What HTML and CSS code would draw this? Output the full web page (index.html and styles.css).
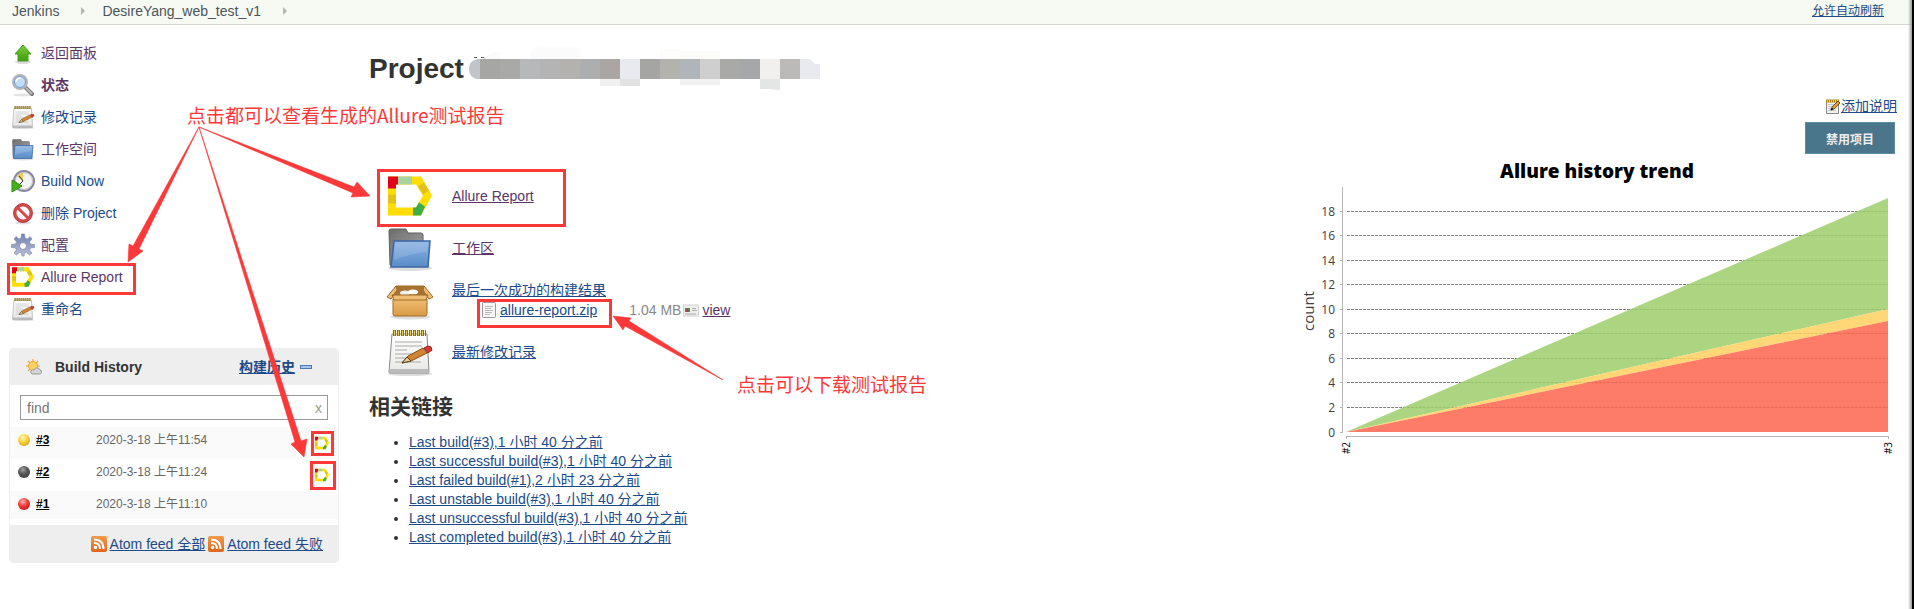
FILE: index.html
```html
<!DOCTYPE html>
<html lang="zh-CN">
<head>
<meta charset="utf-8">
<title>DesireYang_web_test_v1 [Jenkins]</title>
<link rel="stylesheet" href="styles.css">
</head>
<body>
<svg class="defs" aria-hidden="true">
  <defs>
    <linearGradient id="blue" x1="0" y1="0" x2="0" y2="1"><stop offset="0" stop-color="#86b2e2"/><stop offset="1" stop-color="#5a8cc8"/></linearGradient>
    <linearGradient id="gray" x1="0" y1="0" x2="1" y2="1"><stop offset="0" stop-color="#6c6c6c"/><stop offset="1" stop-color="#a8a8a8"/></linearGradient>
    <linearGradient id="paper" x1="0" y1="0" x2="0" y2="1"><stop offset="0" stop-color="#fff"/><stop offset="1" stop-color="#e8e8e6"/></linearGradient>
    <linearGradient id="green" x1="0" y1="0" x2="0" y2="1"><stop offset="0" stop-color="#7ad03a"/><stop offset="1" stop-color="#3f9c0c"/></linearGradient>
    <linearGradient id="steel" x1="0" y1="0" x2="0" y2="1"><stop offset="0" stop-color="#6e83ae"/><stop offset="1" stop-color="#b9bedb"/></linearGradient>
    <linearGradient id="feed" x1="0" y1="0" x2="0" y2="1"><stop offset="0" stop-color="#f39a4c"/><stop offset="1" stop-color="#df651b"/></linearGradient>
    <linearGradient id="wood" x1="0" y1="0" x2="0" y2="1"><stop offset="0" stop-color="#f0bd72"/><stop offset="1" stop-color="#d99b46"/></linearGradient>
    <radialGradient id="ballYellow" cx=".4" cy=".3" r=".7"><stop offset="0" stop-color="#fff6b0"/><stop offset=".5" stop-color="#f8d84a"/><stop offset="1" stop-color="#e0a818"/></radialGradient>
    <radialGradient id="ballGray" cx=".4" cy=".3" r=".7"><stop offset="0" stop-color="#a0a0a0"/><stop offset=".5" stop-color="#5c5c5c"/><stop offset="1" stop-color="#404040"/></radialGradient>
    <radialGradient id="ballRed" cx=".4" cy=".3" r=".7"><stop offset="0" stop-color="#ffb8b8"/><stop offset=".5" stop-color="#f24444"/><stop offset="1" stop-color="#d41818"/></radialGradient>
    <symbol id="allure" viewBox="0 0 44 39">
      <path d="M0 0h33L44 19 33 39H0zM8 8v23h20l7-12-7-11z" fill="#ffde00" fill-rule="evenodd"/>
      <path d="M0 0h10v8H8v4H0z" fill="#e3001b"/><path d="M10 0h14v8H10z" fill="#a5d3a2"/>
      <path d="M0 18h8v9H0zM30 10l6-4 5 8-6 4z" fill="#e0c313"/>
      <path d="M25 31h3l3-5 6 4-4 9h-8z" fill="#3dac49"/>
    </symbol>
    <symbol id="notepad" viewBox="0 0 48 48">
      <ellipse cx="24" cy="46" rx="22" ry="2" fill="#ddd"/>
      <path d="M6 6h35l2 38q0 1-1 1H4q-1 0-1-1z" fill="url(#paper)" stroke="#8a8a8a"/>
      <path d="M4 41h38v3H4z" fill="#bbb"/>
      <path d="M9 14h27M9 18h27M9 22h12M9 26h24M9 30h14M9 34h26" stroke="#a8a8a8"/>
      <path d="M7 5h33" stroke="#8a6d12" stroke-width="6" stroke-dasharray="3 1"/>
      <path d="M8 5h31" stroke="#ebc944" stroke-width="5" stroke-dasharray="1 3"/>
      <path d="M16 35l6-7L37 20l4 5-16 8z" fill="#d28430" stroke="#80501e"/>
      <path d="M16 35l5-6 4 4z" fill="#e7ce9f" stroke="#5b3c16"/>
      <path d="M38 20l4-2q4 0 4 4l-4 3z" fill="#d63a2e" stroke="#98281f"/>
    </symbol>
    <symbol id="folder" viewBox="0 0 48 48">
      <ellipse cx="24" cy="44" rx="22" ry="3" fill="#ddd"/>
      <path d="M3 7q0-2 2-2h15l2 4h13q2 0 2 2v30H4z" fill="url(#gray)" stroke="#5f5f5f"/>
      <path d="M5 11h28M5 14h28" stroke="#888" stroke-opacity=".5"/>
      <path d="M8 17h36l-2 26H5z" fill="url(#blue)" stroke="#3a67a6" stroke-width="1.5"/>
      <path d="M9 18h33l-1 10q-14 1-33 8z" fill="#fff" opacity=".15"/>
    </symbol>
    <symbol id="box" viewBox="0 0 48 48">
      <ellipse cx="24" cy="41" rx="20" ry="2.500" fill="#ddd"/>
      <path d="M10 10h28l5 11H5z" fill="#a87332" stroke="#a06a25"/>
      <ellipse cx="19" cy="17" rx="5" ry="2.500" fill="#eee"/><ellipse cx="27" cy="16" rx="5" ry="2.500" fill="#fafafa"/>
      <path d="M7 23h34v15q0 2-2 2H9q-2 0-2-2z" fill="url(#wood)" stroke="#a06a25"/>
      <path d="M6 19h36l-2 5H8zM10 10L1 21l4 2 6-9zM38 10l9 11-4 2-6-9z" fill="#eebd76" stroke="#a06a25"/>
    </symbol>
    <symbol id="up" viewBox="0 0 24 24">
      <ellipse cx="12" cy="21" rx="8" ry="2" fill="#ddd"/>
      <path d="M12 4l8 9h-3v7H7v-7H4z" fill="url(#green)" stroke="#4c9a1e"/>
    </symbol>
    <symbol id="search" viewBox="0 0 24 24">
      <ellipse cx="11" cy="22" rx="9" ry="1.500" fill="#e2e2e2"/>
      <path d="M14 14l7 7" stroke="#777" stroke-width="4" stroke-linecap="round"/><path d="M15 15l6 6" stroke="#bbb" stroke-width="2"/>
      <circle cx="9" cy="9" r="7" fill="#c3dcf6" stroke="#b2b4b8" stroke-width="2"/><circle cx="9" cy="9" r="5.500" fill="none" stroke="#6f9bd3"/>
      <path d="M5 9q0-4 5-4" fill="none" stroke="#fff" stroke-width="1.500"/>
    </symbol>
    <symbol id="clock" viewBox="0 0 24 24">
      <circle cx="13" cy="12" r="10" fill="#f4f4f2" stroke="#8a88a0" stroke-width="2"/><circle cx="13" cy="12" r="8.500" fill="none" stroke="#bdbdc6"/>
      <path d="M12 12L6 7q3-3 6-3z" fill="#e6cc53"/><path d="M8 7l4 5-3 3" fill="none" stroke="#333"/>
      <path d="M1 11l10 6-10 6z" fill="#43b01c" stroke="#2f8b10"/>
    </symbol>
    <symbol id="stop" viewBox="0 0 24 24">
      <ellipse cx="12" cy="22" rx="8" ry="1.500" fill="#ddd"/>
      <circle cx="12" cy="12" r="8" fill="#fff" stroke="#d5484c" stroke-width="3"/><path d="M6 6l12 12" stroke="#d5484c" stroke-width="3"/>
      <circle cx="12" cy="12" r="9.500" fill="none" stroke="#a92227" stroke-width=".8"/>
    </symbol>
    <symbol id="gear" viewBox="0 0 24 24">
      <path d="M10.500 1h3l.5 4 2.500 1L19 3.500 21 6l-2.500 3 1 2 4 .5v3l-4 .5-1 2L21 20l-2.500 2-3-2.500-2 .5-.5 3h-2l-.5-3-2-.5-3 2.500L3 20l2.500-3-1-2-4-.5v-3l4-.5 1-2L3 6l2-2.500L8 6l2-1z" fill="url(#steel)" stroke="#8591b4" stroke-width=".7"/>
      <circle cx="12" cy="13" r="3.500" fill="#fff" stroke="#8b92b6"/>
    </symbol>
    <symbol id="rss" viewBox="0 0 16 16">
      <rect width="16" height="16" rx="2" fill="url(#feed)"/><circle cx="4.500" cy="11.500" r="1.700" fill="#fff"/>
      <path d="M3 7q6 0 6 6M3 3.500q9.500 0 9.500 9.500" fill="none" stroke="#fff" stroke-width="2"/>
    </symbol>
    <symbol id="weather" viewBox="0 0 16 16">
      <path d="M7 0v14M0 7h14M2 2l10 10M12 2L2 12" stroke="#efa43b" stroke-width="1.200"/>
      <circle cx="7" cy="7" r="4.500" fill="#fbd35e" stroke="#f0a33c"/>
      <path d="M6 15q-2-1-1-3 1-2 3-1 1-3 4-2 2 1 2 2 2 0 1.500 2.500-.5 1.500-2 1.500z" fill="#d4d4d0" stroke="#999"/>
    </symbol>
    <symbol id="text" viewBox="0 0 16 16">
      <rect x="1.500" y=".5" width="13" height="15" rx="1" fill="#f6f6f6" stroke="#999"/><path d="M4 4.500h8M4 6.500h6M4 8.500h8M4 10.500h7M4 12.500h5" stroke="#b8b8b8"/>
    </symbol>
    <symbol id="card" viewBox="0 0 16 16">
      <rect x=".5" y="3" width="15" height="11" fill="#eee" stroke="#d2d2d2"/><path d="M2 6h5v4H2z" fill="#59804a"/><path d="M3 7h2v3H3z" fill="#a44"/><path d="M9 6.500h4M9 8.500h5M2 12h11" stroke="#aaa"/>
    </symbol>
    <symbol id="edit" viewBox="0 0 16 16">
      <path d="M1.500 2.500h12v13h-12z" fill="#f2f2f0" stroke="#888"/><path d="M3 6.500h8M3 8.500h5M3 10.500h8M3 12.500h8" stroke="#c4c4c4"/>
      <path d="M1 3h13" stroke="#a8800c" stroke-width="3"/><path d="M2 3h12" stroke="#f0cf45" stroke-width="3" stroke-dasharray="1 1"/>
      <path d="M6 12l1-3 6-6 2 2-6 6z" fill="#dfa13b" stroke="#54370e" stroke-width=".8"/><path d="M6 12l1-2 1 1z" fill="#222" stroke="#222"/>
    </symbol>
  </defs>
</svg>

<header class="crumbs">
  <nav class="trail" aria-label="breadcrumb">
    <a href="#">Jenkins</a><span class="sep"></span><a href="#">DesireYang_web_test_v1</a><span class="sep"></span>
  </nav>
  <a class="refresh" href="#">允许自动刷新</a>
</header>

<div class="page">
  <aside class="side">
    <nav class="tasks">
      <a class="visited" href="#"><svg class="i24"><use href="#up"/></svg>返回面板</a>
      <a class="visited current" href="#"><svg class="i24"><use href="#search"/></svg>状态</a>
      <a href="#"><svg class="i24"><use href="#notepad"/></svg>修改记录</a>
      <a class="visited" href="#"><svg class="i24"><use href="#folder"/></svg>工作空间</a>
      <a href="#"><svg class="i24"><use href="#clock"/></svg>Build Now</a>
      <a href="#"><svg class="i24"><use href="#stop"/></svg>删除 Project</a>
      <a class="visited" href="#"><svg class="i24"><use href="#gear"/></svg>配置</a>
      <a class="visited" href="#"><svg class="i24 pad"><use href="#allure"/></svg>Allure Report</a>
      <a href="#"><svg class="i24"><use href="#notepad"/></svg>重命名</a>
    </nav>

    <section class="history">
      <div class="history-head">
        <svg class="i16"><use href="#weather"/></svg>
        <strong>Build History</strong>
        <a href="#">构建历史</a><span class="minus"></span>
      </div>
      <div class="find">
        <input type="text" placeholder="find" aria-label="find"><button type="button">x</button>
      </div>
      <table class="builds">
        <tr><td class="ball"><svg class="i16"><circle cx="8" cy="8" r="6" fill="url(#ballYellow)"/></svg></td><td class="num"><a href="#">#3</a></td><td>2020-3-18 上午11:54</td><td class="badge"><svg class="i16"><use href="#allure"/></svg></td></tr>
        <tr><td class="ball"><svg class="i16"><circle cx="8" cy="8" r="6" fill="url(#ballGray)"/></svg></td><td class="num"><a href="#">#2</a></td><td>2020-3-18 上午11:24</td><td class="badge"><svg class="i16"><use href="#allure"/></svg></td></tr>
        <tr><td class="ball"><svg class="i16"><circle cx="8" cy="8" r="6" fill="url(#ballRed)"/></svg></td><td class="num"><a href="#">#1</a></td><td>2020-3-18 上午11:10</td><td></td></tr>
      </table>
      <div class="feeds">
        <svg class="i16"><use href="#rss"/></svg><a href="#">Atom feed 全部</a>
        <svg class="i16"><use href="#rss"/></svg><a href="#">Atom feed 失败</a>
      </div>
    </section>
  </aside>

  <main class="main">
    <div class="content">
      <h1>Project
        <svg class="mosaic" width="352" height="48" aria-hidden="true">
          <path d="M18 12q2-5 9-5h4v7H18zM60 12q2-10 14-10h36v12H60z" fill="#fbfbfb"/><path d="M191 4h20v10h-20zM211 6h40v8h-40z" fill="#fcfcfb"/>
          <path d="M11 14H8Q0 16 0 24t8 10h3z" fill="#c1c5c9"/>
          <path d="M11 14h20v20H11z" fill="#a6a6a5"/><path d="M31 14h20v20H31z" fill="#a9a9a8"/><path d="M51 14h20v20H51z" fill="#b7b8ba"/><path d="M71 14h20v20H71z" fill="#b4b4b4"/><path d="M91 14h20v20H91z" fill="#b3b2ae"/><path d="M111 14h20v20h-20z" fill="#adaeb0"/><path d="M131 14h20v20h-20z" fill="#aaa6a3"/><path d="M151 14h20v20h-20z" fill="#e9eaf0"/><path d="M171 14h20v20h-20z" fill="#a5a5a4"/><path d="M191 14h20v20h-20z" fill="#b3b2ad"/><path d="M211 14h20v20h-20z" fill="#b0b5b9"/><path d="M231 14h20v20h-20z" fill="#cfcfcf"/><path d="M251 14h20v20h-20z" fill="#a9a9a8"/><path d="M271 14h20v20h-20z" fill="#a6a7a9"/><path d="M291 14h20v20h-20z" fill="#f1f0ef"/><path d="M311 14h20v20h-20z" fill="#bcbab9"/><path d="M331 14h10l5 5h5v15h-20z" fill="#e9eaef"/>
          <path d="M131 34h20v7h-20zM211 34h40v6h-40z" fill="#f1f1f1"/><path d="M151 34h20v7h-20z" fill="#e2e2e2"/><path d="M291 34h20v11l-12-1h-8z" fill="#e4e6e6"/>
          <path d="M5 12.500h3M12 12.500h3l1 1" stroke="#555" fill="none"/>
        </svg>
      </h1>
      <table class="links">
        <tr><td class="ico"><svg class="i48 logo"><use href="#allure"/></svg></td><td><a class="visited" href="#">Allure Report</a></td></tr>
        <tr><td class="ico"><svg class="i48"><use href="#folder"/></svg></td><td><a class="visited" href="#">工作区</a></td></tr>
        <tr><td class="ico"><svg class="i48"><use href="#box"/></svg></td><td><a href="#">最后一次成功的构建结果</a>
          <div class="artifact"><svg class="i16"><use href="#text"/></svg><a href="#">allure-report.zip</a><span class="size">1.04 MB</span><svg class="i16"><use href="#card"/></svg><a class="visited" href="#">view</a></div></td></tr>
        <tr><td class="ico"><svg class="i48"><use href="#notepad"/></svg></td><td><a href="#">最新修改记录</a></td></tr>
      </table>
      <h2>相关链接</h2>
      <ul class="permalinks">
        <li><a href="#">Last build(#3),1 小时 40 分之前</a></li>
        <li><a href="#">Last successful build(#3),1 小时 40 分之前</a></li>
        <li><a href="#">Last failed build(#1),2 小时 23 分之前</a></li>
        <li><a href="#">Last unstable build(#3),1 小时 40 分之前</a></li>
        <li><a href="#">Last unsuccessful build(#3),1 小时 40 分之前</a></li>
        <li><a href="#">Last completed build(#3),1 小时 40 分之前</a></li>
      </ul>
    </div>

    <div class="aside">
      <div class="describe"><svg class="i16"><use href="#edit"/></svg><a href="#">添加说明</a></div>
      <button class="disable" type="button">禁用项目</button>
      <svg class="chart" width="600" height="304" viewBox="0 0 600 304" role="img" aria-label="Allure history trend">
        <text class="chart-title" x="300" y="23">Allure history trend</text>
        <path class="grid" d="M50 252.500H591M50 227.500H591M50 203.500H591M50 178.500H591M50 154.500H591M50 129.500H591M50 105.500H591M50 80.500H591M50 56.500H591"/>
        <g fill-opacity=".85">
          <path d="M49 277L591 43v111z" fill="#9dce6c"/>
          <path d="M49 277L591 154v12z" fill="#ffd05f"/>
          <path d="M49 277L591 166v111z" fill="#fd654d"/>
        </g>
        <path class="axis" d="M45.500 32V277.500M43 277.500h3M43 252.500h3M43 227.500h3M43 203.500h3M43 178.500h3M43 154.500h3M43 129.500h3M43 105.500h3M43 80.500h3M43 56.500h3M49 281.500H591.500M49.500 281v3M591.500 281v3"/>
        <g class="ticks">
          <text x="38" y="282">0</text><text x="38" y="257">2</text><text x="38" y="232">4</text><text x="38" y="208">6</text><text x="38" y="183">8</text><text x="38" y="159">10</text><text x="38" y="134">12</text><text x="38" y="110">14</text><text x="38" y="85">16</text><text x="38" y="61">18</text>
        </g>
        <text class="count" transform="translate(17 156) rotate(-90)">count</text>
        <text class="build" transform="translate(53 293) rotate(-90)">#2</text>
        <text class="build" transform="translate(595 293) rotate(-90)">#3</text>
      </svg>
    </div>
  </main>
</div>

<div class="notes">
  <svg class="marks" width="940" height="500" aria-hidden="true">
    <g fill="none" stroke="#fc3838" stroke-width="3">
      <path d="M8.500 264.500h126v29H8.500zM378.500 170.500h186v55h-186zM478.500 300.500h132v26h-132zM312.500 432.500h20v22h-20zM311.500 462.500h23v26h-23z"/>
    </g>
    <g fill="#fc3838" stroke="#fc3838" stroke-width=".6">
      <path d="M199 127L133 246l-4-2-1 18 15-11-4-2z"/>
      <path d="M199 127L354 187l3-5 13 14-19 1 2-4z"/>
      <path d="M199 127L295 442l-4 2 13 13 3-18-6 2z"/>
      <path d="M723 380L629 321l2-3-18-2 10 14 2-4z"/>
    </g>
  </svg>
  <p class="note note-view">点击都可以查看生成的Allure测试报告</p>
  <p class="note note-download">点击可以下载测试报告</p>
</div>
</body>
</html>
```
FILE: styles.css
```css
* { box-sizing: border-box; }
body {
  margin: 0;
  min-height: 100vh;
  position: relative;
  background: #fff;
  color: #333;
  font: 14px/20px "Liberation Sans", "Noto Sans CJK SC", sans-serif;
}
body::after {
  content: "";
  position: absolute;
  inset: 0 0 0 auto;
  width: 6px;
  background: linear-gradient(to right, transparent, #999 4px, #000 4px);
}
a { color: #204a87; }
a.visited { color: #5c3566; }
svg { display: block; flex: none; }
.defs { position: absolute; width: 0; height: 0; }
.i16 { width: 16px; height: 16px; }
.i24 { width: 24px; height: 24px; }
.i24.pad { padding: 1px; }
.i48 { width: 48px; height: 48px; }
.i48.logo { padding: 2px; }

.crumbs {
  display: flex;
  justify-content: space-between;
  align-items: center;
  height: 25px;
  padding: 0 30px 2px 12px;
  background: #f6faf2;
  border-bottom: 1px solid #d3d7cf;
}
.trail { display: flex; align-items: center; }
.trail a { color: #4d545d; text-decoration: none; }
.sep {
  margin: 0 17px 0 22px;
  border: 4px solid transparent;
  border-left-color: #b4b4b4;
  border-right-width: 0;
}
.refresh { font-size: 12px; }

.page { display: flex; gap: 30px; padding: 12px 17px 0 9px; }
.side { width: 330px; flex: none; }
.tasks { display: flex; flex-direction: column; padding-left: 2px; }
.tasks a {
  display: flex;
  align-items: center;
  gap: 6px;
  height: 32px;
  text-decoration: none;
}
.tasks .current { font-weight: bold; }

.history {
  margin-top: 23px;
  border: 1px solid #eee;
  border-radius: 4px;
  overflow: hidden;
}
.history-head {
  display: flex;
  align-items: center;
  height: 36px;
  padding: 0 26px 0 16px;
  background: #eee;
}
.history-head strong { margin: 0 auto 0 13px; }
.history-head a { font-weight: bold; }
.minus {
  width: 12px;
  height: 4px;
  margin-left: 5px;
  background: #a9c6ea;
  border: 1px solid #4d7ab5;
}
.find {
  display: flex;
  height: 25px;
  margin: 10px 10px 7px;
  border: 1px solid #999;
}
.find input, .find button {
  border: 0;
  background: none;
  color: #777;
  font: inherit;
}
.find input { flex: 1; min-width: 0; padding: 0 6px; }
.find button { padding: 0 5px; color: #999; }

.builds {
  width: 100%;
  border-collapse: collapse;
  color: #666;
  font-size: 12px;
}
.builds td { height: 32px; padding: 0 0 6px; }
.builds tr:nth-child(odd) { background: #fafafa; }
.builds tr:last-child td { height: 28px; padding-bottom: 2px; }
.builds .ball { width: 26px; padding-left: 6px; }
.builds .num { width: 60px; }
.builds .num a { color: #000; font-weight: bold; }
.builds .badge { width: 24px; padding: 0; }
.builds .badge svg { padding: 1px; }
.feeds {
  display: flex;
  align-items: center;
  justify-content: flex-end;
  gap: 3px;
  height: 37px;
  margin-top: 6px;
  padding-right: 15px;
  background: #eee;
}

.main { flex: 1; display: flex; justify-content: space-between; }
h1 {
  display: flex;
  align-items: center;
  gap: 5px;
  height: 48px;
  margin: 8px 0 77px;
  font-size: 28px;
  line-height: 48px;
}
.mosaic { overflow: visible; }
.links { border-collapse: collapse; }
.links td { height: 52px; padding: 0; }
.links .ico { width: 83px; padding-left: 17px; }
.artifact { display: flex; align-items: center; margin-left: 29px; }
.artifact a { margin-left: 3px; }
.artifact .size { margin: 0 2px 0 32px; color: #888; }
h2 { margin: 17px 0 14px; font-size: 21px; line-height: 24px; }
.permalinks { margin: 0; padding-left: 40px; line-height: 19px; }

.aside {
  display: flex;
  flex-direction: column;
  align-items: flex-end;
  padding-top: 59px;
}
.describe { display: flex; align-items: center; }
.disable {
  width: 90px;
  height: 32px;
  margin: 6px 2px 1px 0;
  border: 1px solid #5c8da6;
  background: #4b758b;
  color: #eee;
  font: bold 12px "Liberation Sans", "Noto Sans CJK SC", sans-serif;
}
.chart-title { font: 800 19px "Open Sans", sans-serif; text-anchor: middle; fill: #000; }
.grid { fill: none; stroke: #808080; stroke-dasharray: 3 1; }
.axis { fill: none; stroke: #b4b4b4; }
.ticks { font: 12px "Open Sans", sans-serif; text-anchor: end; fill: #404040; }
.count { font: 15px "Open Sans", sans-serif; text-anchor: middle; fill: #404040; }
.build { font: 10px "Open Sans", sans-serif; text-anchor: middle; fill: #000; }

.notes { position: absolute; top: 0; left: 0; pointer-events: none; }
.note {
  position: absolute;
  margin: 0;
  color: #fc3838;
  font: 19px/24px "Noto Sans CJK SC", sans-serif;
  white-space: nowrap;
}
.note-view { left: 187px; top: 103px; }
.note-download { left: 737px; top: 372px; }
```
